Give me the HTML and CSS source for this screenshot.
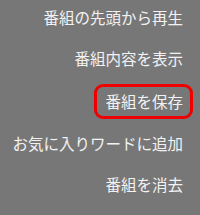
FILE: index.html
```html
<!DOCTYPE html>
<html lang="ja">
  <head>
    <meta charset="UTF-8" />
    <title>番組メニュー</title>
    <link rel="stylesheet" href="styles.css">
  </head>
  <body>
    <ul class="menu">
      <li class="item">番組の先頭から再生</li>
      <li class="item">番組内容を表示</li>
      <li class="item selected">番組を保存</li>
      <li class="item">お気に入りワードに追加</li>
      <li class="item">番組を消去</li>
    </ul>
  </body>
</html>
```
FILE: styles.css
```css
* {
  padding: 0;
  margin: 0;
  box-sizing: border-box;
}
body {
  width: 200px;
  height: 215px;
  background: #777777;
  font-family: "Noto Sans CJK JP", sans-serif;
  overflow: hidden;
}
.menu {
  list-style: none;
  display: flex;
  flex-direction: column;
  align-items: flex-end;
  gap: 7px;
  padding-right: 7px;
}
.item {
  height: 34px;
  line-height: 28px;
  padding: 0 7px 0 8px;
  border: 3px solid transparent;
  border-radius: 9px;
  font-size: 15.5px;
  color: #f2f2f2;
  white-space: nowrap;
}
.item.selected {
  height: 35px;
  margin-top: 2px;
  border-color: #ee0000;
}
```
